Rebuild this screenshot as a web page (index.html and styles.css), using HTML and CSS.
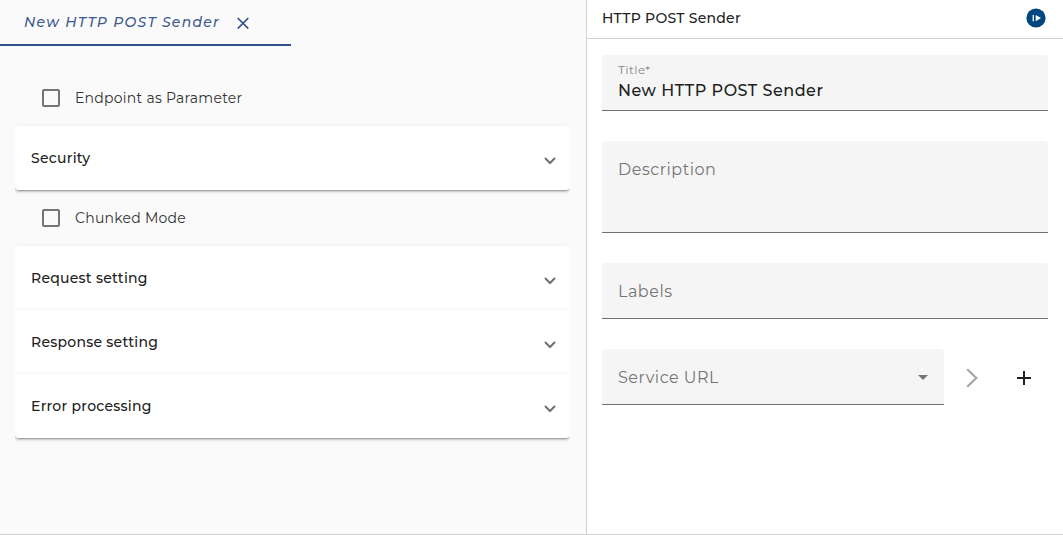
FILE: index.html
```html
<!DOCTYPE html>
<html lang="en">
<head>
<meta charset="utf-8">
<title>HTTP POST Sender</title>
<link rel="stylesheet" href="styles.css">
</head>
<body>
<div class="app">
  <main class="editor">
    <div class="tab">
      <span class="tab-title">New HTTP POST Sender</span>
      <svg class="tab-close" viewBox="0 0 12 12"><path d="M.7 1L11.3 11.5M11.3 1L.7 11.5"/></svg>
    </div>
    <div class="settings">
      <label class="check"><span class="box"></span><span>Endpoint as Parameter</span></label>
      <div class="accordion">
        <div class="panel"><span>Security</span><svg class="chevron" viewBox="0 0 12 8"><path d="M1 1L6 6L11 1"/></svg></div>
      </div>
      <label class="check"><span class="box"></span><span>Chunked Mode</span></label>
      <div class="accordion">
        <div class="panel"><span>Request setting</span><svg class="chevron" viewBox="0 0 12 8"><path d="M1 1L6 6L11 1"/></svg></div>
        <div class="panel"><span>Response setting</span><svg class="chevron" viewBox="0 0 12 8"><path d="M1 1L6 6L11 1"/></svg></div>
        <div class="panel"><span>Error processing</span><svg class="chevron" viewBox="0 0 12 8"><path d="M1 1L6 6L11 1"/></svg></div>
      </div>
    </div>
  </main>
  <aside class="details">
    <header class="details-head">
      <span>HTTP POST Sender</span>
      <svg class="play" viewBox="0 0 20 20"><circle cx="10" cy="10" r="9.6"/><path d="M6.6 7H7.9V13.2H6.6ZM9.7 7L15 10.1L9.7 13.2Z"/></svg>
    </header>
    <div class="form">
      <div class="field filled">
        <span class="float-label">Title*</span>
        <span class="value">New HTTP POST Sender</span>
      </div>
      <div class="field tall"><span>Description</span></div>
      <div class="field"><span>Labels</span></div>
      <div class="service">
        <div class="field select"><span>Service URL</span><svg class="arrow" viewBox="0 0 10 5"><path d="M0 0H10L5 5Z"/></svg></div>
        <svg class="next" viewBox="0 0 12 20"><path d="M1.2 1.2L10.3 10L1.2 18.8"/></svg>
        <svg class="plus" viewBox="0 0 14 14"><path d="M7 0V14M0 7H14"/></svg>
      </div>
    </div>
  </aside>
</div>
</body>
</html>
```
FILE: styles.css
```css
* { box-sizing: border-box; }
body { margin: 0; font-family: Montserrat, Inter, sans-serif; color: #212121; background: #fff; }
svg { display: block; flex: none; fill: none; }
span { white-space: nowrap; }
.app { display: flex; height: 535px; border-bottom: 1px solid #d0d0d0; }
.editor { width: 587px; background: #fafafa; border-right: 1px solid #d0d0d0; }
.tab { display: flex; align-items: center; width: 291px; height: 46px; padding-left: 24px; border-bottom: 2px solid #2f4f87; }
.tab-title { width: 213px; font-size: 14px; font-weight: 500; font-style: italic; color: #3d5a8f; letter-spacing: 1.25px; }
.tab-close { width: 12px; height: 12px; margin-top: 1px; stroke: #2f4f87; stroke-width: 1.7; }
.settings { padding: 24px 16px 0 15px; }
.check { display: flex; align-items: center; height: 56px; padding-left: 27px; font-size: 14px; letter-spacing: .25px; color: #333; }
.box { width: 18px; height: 18px; margin-right: 15px; border: 2px solid #757575; border-radius: 2px; }
.accordion { clip-path: inset(-8px 0 -8px 0); }
.panel { display: flex; align-items: center; justify-content: space-between; height: 64px; padding: 0 14px 0 16px; background: #fff; font-size: 14px; font-weight: 500; letter-spacing: .25px; box-shadow: 0 3px 1px -2px rgba(0,0,0,.2), 0 2px 2px rgba(0,0,0,.14), 0 1px 5px rgba(0,0,0,.12); }
.panel:first-child { border-top-left-radius: 4px; border-top-right-radius: 4px; }
.panel:last-child { border-bottom-left-radius: 4px; border-bottom-right-radius: 4px; }
.chevron { width: 12px; height: 8px; margin-top: 6px; stroke: #707070; stroke-width: 2; }
.details { flex: 1; background: #fff; }
.details-head { display: flex; align-items: center; justify-content: space-between; height: 39px; padding: 0 17px 2px 15px; border-bottom: 1px solid #d0d0d0; font-size: 14px; font-weight: 500; letter-spacing: .25px; }
.play { width: 20px; height: 20px; }
.play circle { fill: #00467f; }
.play path { fill: #fff; }
.form { display: flex; flex-direction: column; gap: 30px; padding: 16px 15px 0; }
.field { display: flex; align-items: center; height: 56px; padding: 1px 16px 0; background: #f5f5f5; border-bottom: 1px solid #707070; border-radius: 4px 4px 0 0; font-size: 16px; letter-spacing: .5px; color: #757575; }
.filled { flex-direction: column; align-items: flex-start; padding-top: 7px; }
.float-label { font-size: 12px; line-height: 16px; letter-spacing: .45px; color: #858585; }
.value { font-size: 16px; line-height: 26px; font-weight: 500; color: #212121; }
.tall { height: 92px; align-items: flex-start; padding-top: 19px; }
.service { display: flex; align-items: center; }
.select { width: 342px; justify-content: space-between; }
.arrow { width: 10px; height: 5px; fill: #757575; }
.next { width: 12px; height: 20px; margin: 2px 0 0 22px; stroke: #a6a6a6; stroke-width: 2.2; }
.plus { width: 14px; height: 14px; margin: 2px 0 0 39px; stroke: #212121; stroke-width: 2; }
```
